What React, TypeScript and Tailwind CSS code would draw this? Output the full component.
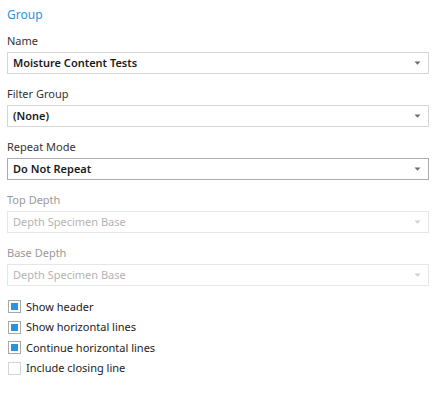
const font = { fontFamily: '"Noto Sans", "Open Sans", sans-serif' };

function Caret({ disabled }: { disabled?: boolean }) {
  return (
    <svg width="7" height="4" viewBox="0 0 7 4" className="shrink-0">
      <path d="M0.5 0.5H6.5L3.5 3.8Z" fill={disabled ? '#cfcfcf' : '#6e6e6e'} />
    </svg>
  );
}

function Field({
  label,
  value,
  disabled,
  strong,
}: {
  label: string;
  value: string;
  disabled?: boolean;
  strong?: boolean;
}) {
  return (
    <div className="flex flex-col">
      <div
        className={`h-[16px] text-[11px] leading-[16px] ${
          disabled ? 'text-[#9a9a9a]' : 'text-[#333333]'
        }`}
      >
        {label}
      </div>
      <div
        className={`mt-[3px] flex h-[22px] items-center justify-between border bg-white pl-[5px] pr-[7px] ${
          disabled
            ? 'border-[#e6e6e6]'
            : strong
            ? 'border-[#acacac]'
            : 'border-[#d6d6d6]'
        }`}
      >
        <span
          className={`text-[11px] leading-[16px] ${
            disabled ? 'text-[#b4b4b4]' : 'font-semibold text-[#1a1a1a]'
          }`}
        >
          {value}
        </span>
        <Caret disabled={disabled} />
      </div>
    </div>
  );
}

function Check({ label, checked }: { label: string; checked?: boolean }) {
  return (
    <div className="flex h-[13px] items-center">
      <div
        className={`flex h-[13px] w-[13px] items-center justify-center border bg-white ${
          checked ? 'border-[#a8a8a8]' : 'border-[#d4d4d4]'
        }`}
      >
        {checked && <div className="h-[7px] w-[7px] bg-[#2a93dd]" />}
      </div>
      <span className="ml-[5px] text-[11px] leading-[16px] text-[#222222]">{label}</span>
    </div>
  );
}

export default function App() {
  return (
    <div className="h-[399px] w-[432px] bg-white pl-[7px] pr-[3px] pt-[6px]" style={font}>
      <div className="mb-[9px] h-[18px] text-[12px] leading-[18px] text-[#2a93dd]">Group</div>
      <div className="flex flex-col gap-[12px]">
        <Field label="Name" value="Moisture Content Tests" />
        <Field label="Filter Group" value="(None)" />
        <Field label="Repeat Mode" value="Do Not Repeat" strong />
        <Field label="Top Depth" value="Depth Specimen Base" disabled />
        <Field label="Base Depth" value="Depth Specimen Base" disabled />
      </div>
      <div className="mt-[14px] flex flex-col gap-[7.5px] pl-[1px]">
        <Check label="Show header" checked />
        <Check label="Show horizontal lines" checked />
        <Check label="Continue horizontal lines" checked />
        <Check label="Include closing line" />
      </div>
    </div>
  );
}
